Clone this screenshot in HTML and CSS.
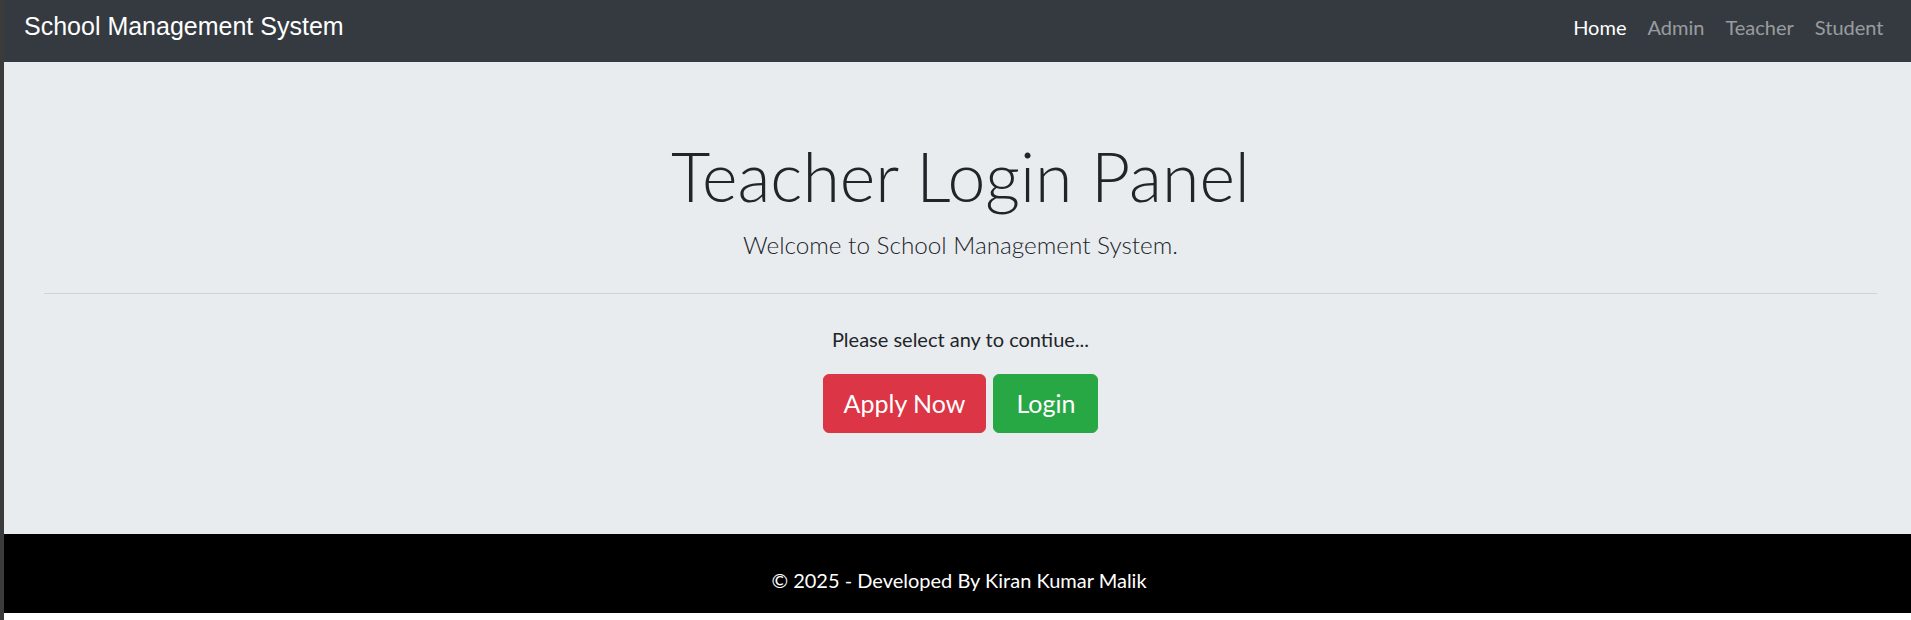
FILE: index.html
```html
<!DOCTYPE html>
<html lang="en">
<head>
<meta charset="utf-8">
<title>Teacher Login Panel</title>
<link rel="stylesheet" href="styles.css">
</head>
<body>
<div class="frame">
  <div class="edge"></div>
  <div class="page">
    <nav class="navbar">
      <a class="brand" href="#">School Management System</a>
      <ul class="nav">
        <li><a class="nav-link active" href="#">Home</a></li>
        <li><a class="nav-link" href="#">Admin</a></li>
        <li><a class="nav-link" href="#">Teacher</a></li>
        <li><a class="nav-link" href="#">Student</a></li>
      </ul>
    </nav>
    <main class="jumbotron">
      <h1 class="display">Teacher Login Panel</h1>
      <p class="lead">Welcome to School Management System.</p>
      <hr class="divider">
      <p class="prompt">Please select any to contiue...</p>
      <div class="actions">
        <a class="btn btn-danger" href="#">Apply Now</a>
        <a class="btn btn-success" href="#">Login</a>
      </div>
    </main>
    <footer class="footer">
      <p class="footer-text">© 2025 - Developed By Kiran Kumar Malik</p>
    </footer>
  </div>
</div>
</body>
</html>
```
FILE: styles.css
```css
html, body {
  margin: 0;
  padding: 0;
  height: 100%;
  background: #fff;
  overflow: hidden;
}

body {
  font-family: Lato, "Open Sans", sans-serif;
  color: #212529;
}

.frame {
  display: flex;
  height: 620px;
  width: 1914px;
}

.edge {
  width: 4px;
  flex-shrink: 0;
  background: #3b3b3b;
}

.page {
  width: 1910px;
  flex-shrink: 0;
  display: flex;
  flex-direction: column;
}

/* Navbar */
.navbar {
  height: 62px;
  box-sizing: border-box;
  background: #343a40;
  display: flex;
  align-items: flex-start;
  justify-content: space-between;
  padding: 0 20px;
}

.brand {
  font-family: "Liberation Sans", Arial, sans-serif;
  font-size: 25px;
  line-height: 28px;
  margin-top: 12px;
  color: #fff;
  text-decoration: none;
}

.nav {
  list-style: none;
  margin: 12px 0 0 0;
  padding: 0;
  display: flex;
}

.nav-link {
  display: block;
  padding: 0 10.5px;
  font-size: 20px;
  line-height: 30px;
  color: rgba(255, 255, 255, 0.5);
  text-decoration: none;
}

.nav-link.active {
  color: #fff;
}

/* Jumbotron */
.jumbotron {
  background: #e9ecef;
  height: 472px;
  box-sizing: border-box;
  padding: 72px 37px 0 40px;
  display: flex;
  flex-direction: column;
  align-items: center;
  text-align: center;
}

.display {
  margin: 0;
  font-size: 68px;
  font-weight: 300;
  line-height: 84px;
  color: #212529;
}

.lead {
  margin: 8px 0 0 0;
  font-size: 24.3px;
  font-weight: 300;
  line-height: 37px;
}

.divider {
  align-self: stretch;
  margin: 30px 0;
  border: 0;
  border-top: 1px solid rgba(0, 0, 0, 0.1);
  height: 0;
}

.prompt {
  margin: 0 0 20px 0;
  font-size: 20px;
  line-height: 30px;
}

.actions {
  display: flex;
  gap: 7px;
}

.btn {
  display: block;
  height: 59px;
  box-sizing: border-box;
  padding: 0 20px;
  border: 1px solid transparent;
  border-radius: 6px;
  font-size: 25px;
  line-height: 57px;
  color: #fff;
  text-decoration: none;
}

.btn-danger {
  background: #dc3545;
  border-color: #dc3545;
}

.btn-success {
  background: #28a745;
  border-color: #28a745;
  padding: 0 22px;
}

/* Footer */
.footer {
  height: 79px;
  box-sizing: border-box;
  background: #000;
  padding-top: 31px;
  text-align: center;
}

.footer-text {
  margin: 0;
  color: #fff;
  font-size: 20px;
  line-height: 30px;
}
```
